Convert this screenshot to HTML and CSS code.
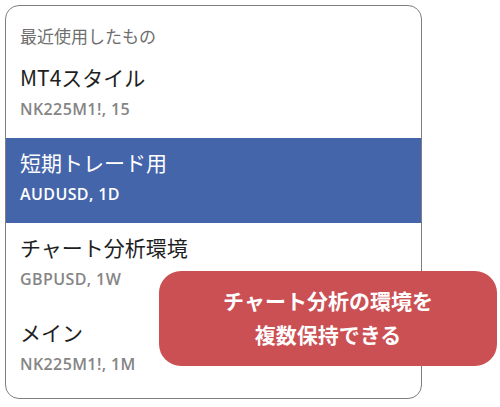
FILE: index.html
```html
<!DOCTYPE html>
<html lang="ja">
<head>
    <meta charset="UTF-8">
    <meta name="viewport" content="width=device-width, initial-scale=1.0">
    <title>最近使用したもの</title>
    <link rel="stylesheet" href="styles.css">
</head>
<body>

    <div class="panel">
        <div class="panel-header">最近使用したもの</div>

        <div class="item">
            <div class="item-title">MT4スタイル</div>
            <div class="item-sub">NK225M1!, 15</div>
        </div>

        <div class="item selected">
            <div class="item-title">短期トレード用</div>
            <div class="item-sub">AUDUSD, 1D</div>
        </div>

        <div class="item">
            <div class="item-title">チャート分析環境</div>
            <div class="item-sub">GBPUSD, 1W</div>
        </div>

        <div class="item">
            <div class="item-title">メイン</div>
            <div class="item-sub">NK225M1!, 1M</div>
        </div>
    </div>

    <!-- 吹き出し -->
    <div class="callout">
        チャート分析の環境を<br>
        複数保持できる
    </div>

</body>
</html>
```

FILE: styles.css
```css
/* 全体 */
body {
    margin: 0;
    padding: 5px 0 0 5px;
    background-color: #ffffff;
    font-family: "Noto Sans CJK JP", "Noto Sans", sans-serif;
    color: #222;
    position: relative;
    width: 500px;
    height: 407px;
    box-sizing: border-box;
    overflow: hidden;
}

/* リストのパネル */
.panel {
    width: 417px;
    height: 394px;
    box-sizing: border-box;
    border: 1.5px solid #7e7e7e;
    border-radius: 14px;
    overflow: hidden;
    background-color: #fff;
}

.panel-header {
    height: 47px;
    box-sizing: border-box;
    padding: 19px 0 0 14px;
    font-size: 17px;
    line-height: 22px;
    color: #6e6e6e;
}

/* 各項目 */
.item {
    height: 85px;
    box-sizing: border-box;
    padding: 10px 0 0 14px;
}

.item-title {
    font-size: 21px;
    line-height: 28px;
    color: #1e1e1e;
}

.item-sub {
    margin-top: 7px;
    font-family: "Open Sans", "Noto Sans", sans-serif;
    font-weight: 600;
    font-size: 16px;
    letter-spacing: 0.4px;
    line-height: 22px;
    color: #858585;
}

.item.selected {
    background-color: #4565ab;
}

.item.selected .item-title,
.item.selected .item-sub {
    color: #ffffff;
}

/* 赤い吹き出し */
.callout {
    position: absolute;
    left: 159px;
    top: 271px;
    width: 338px;
    height: 95px;
    box-sizing: border-box;
    padding-top: 12px;
    border-radius: 22px;
    background-color: #cb5054;
    color: #ffffff;
    font-weight: 700;
    font-size: 21px;
    line-height: 34px;
    text-align: center;
}
```
